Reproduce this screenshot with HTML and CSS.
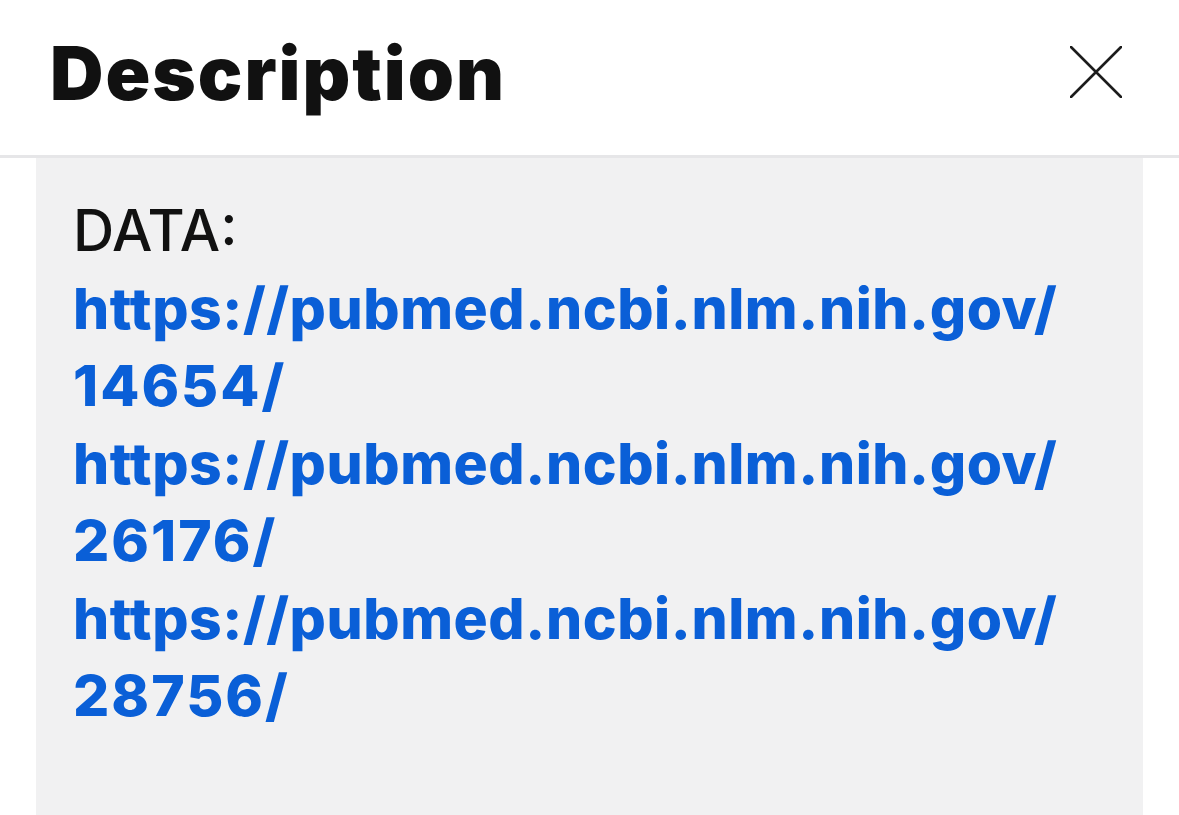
FILE: index.html
```html
<!DOCTYPE html>
<html lang="en">
<head>
<meta charset="utf-8">
<title>Description</title>
<link rel="stylesheet" href="styles.css">
</head>
<body>
  <header class="sheet-header">
    <h1 class="sheet-title">Description</h1>
    <button class="close-btn" aria-label="Close">
      <svg width="52" height="52" viewBox="0 0 52 52" aria-hidden="true">
        <path d="M1 1 L51 51 M51 1 L1 51" stroke="#1c1c1c" stroke-width="2.6" stroke-linecap="round" fill="none"/>
      </svg>
    </button>
  </header>
  <main class="sheet-body">
    <div class="desc">
      <p class="label">DATA:</p>
      <a class="link" href="#">https://pubmed.ncbi.nlm.nih.gov/<br><span class="num">14654/</span></a>
      <a class="link" href="#">https://pubmed.ncbi.nlm.nih.gov/<br><span class="num">26176/</span></a>
      <a class="link" href="#">https://pubmed.ncbi.nlm.nih.gov/<br><span class="num">28756/</span></a>
    </div>
  </main>
</body>
</html>
```
FILE: styles.css
```css
html, body {
  margin: 0;
  padding: 0;
  background: #ffffff;
  font-family: Inter, "Liberation Sans", sans-serif;
  height: 100%;
  overflow: hidden;
}

body {
  display: flex;
  flex-direction: column;
}

.sheet-header {
  display: flex;
  align-items: center;
  justify-content: space-between;
  padding: 0 57px 0 50px;
  border-bottom: 3px solid #e6e6e8;
  box-sizing: border-box;
  height: 158px;
  flex: none;
}

.sheet-title {
  margin: 0;
  font-size: 74px;
  font-weight: 900;
  letter-spacing: 2px;
  color: #111111;
  line-height: 1;
  padding-bottom: 10px;
}

.close-btn {
  border: 0;
  background: none;
  padding: 0;
  display: flex;
  margin-bottom: 12px;
}

.sheet-body {
  flex: 1;
  margin: 0 36px;
  background: #f1f1f2;
  padding: 34px 39px 0;
  overflow: hidden;
}

.label {
  margin: 0;
  font-size: 57px;
  line-height: 77.5px;
  font-weight: 500;
  color: #111111;
  margin-left: -2px;
}

.link {
  display: block;
  font-size: 57px;
  line-height: 77.5px;
  font-weight: 800;
  letter-spacing: 0.55px;
  color: #0a5fd7;
  text-decoration: none;
  margin-left: -2px;
}

.num {
  letter-spacing: 2px;
}
```
